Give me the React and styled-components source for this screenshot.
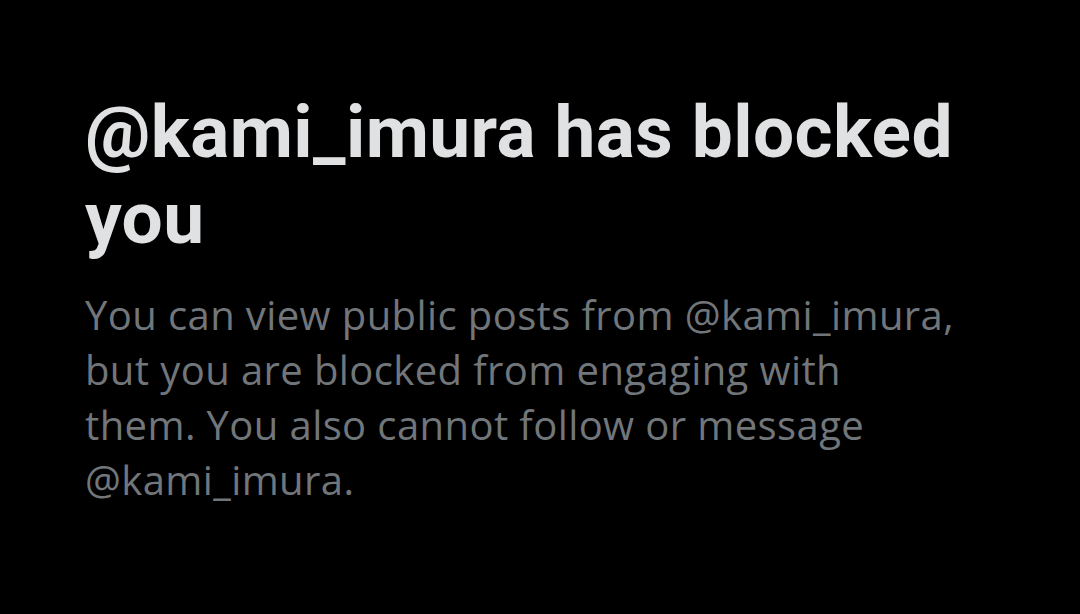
import React from "react";
import styled, { createGlobalStyle } from "styled-components";

const Global = createGlobalStyle`
  html, body { margin: 0; padding: 0; background: #000; }
  body { font-family: "Open Sans", "Noto Sans", sans-serif; }
`;

const Page = styled.div`
  width: 1080px;
  height: 614px;
  background: #000;
  box-sizing: border-box;
  padding: 89px 40px 0 85px;
  display: flex;
  flex-direction: column;
  gap: 26px;
`;

const Title = styled.h1`
  margin: 0;
  font-family: Roboto, "Noto Sans", sans-serif;
  font-size: 73px;
  line-height: 86px;
  font-weight: 700;
  color: #e0e1e2;
  letter-spacing: 0.4px;
  max-width: 920px;
`;

const Body = styled.p`
  margin: 0;
  font-size: 40px;
  line-height: 55px;
  font-weight: 400;
  color: #71767b;
  letter-spacing: 0.4px;
  white-space: nowrap;
`;

export default function App() {
  return (
    <>
      <Global />
      <Page>
        <Title>@kami_imura has blocked you</Title>
        <Body>
          You can view public posts from @kami_imura,
          <br />
          but you are blocked from engaging with
          <br />
          them. You also cannot follow or message
          <br />
          @kami_imura.
        </Body>
      </Page>
    </>
  );
}
